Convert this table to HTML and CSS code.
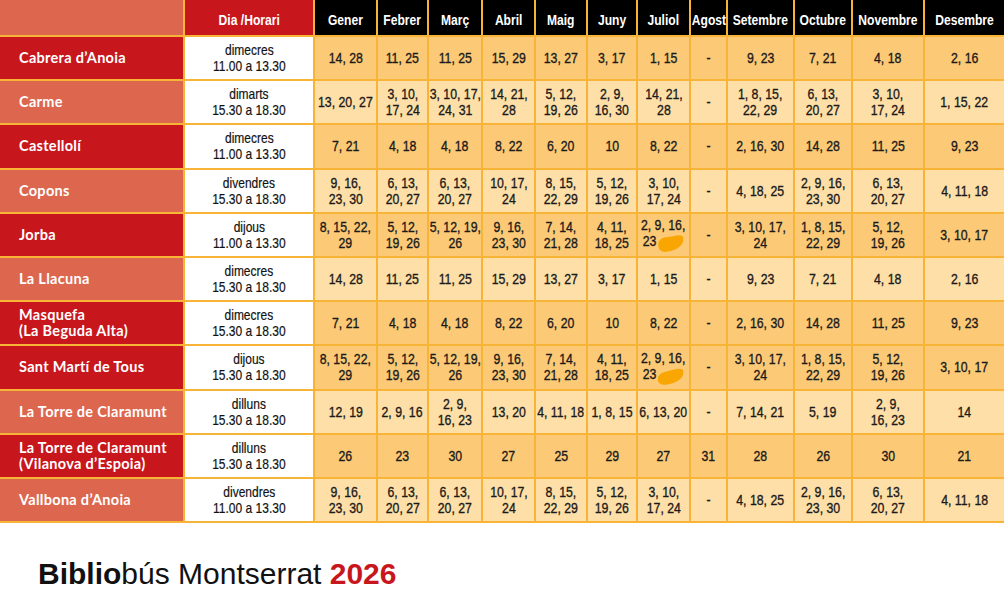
FILE: index.html
```html
<!DOCTYPE html>
<html lang="ca">
<head>
<meta charset="utf-8">
<title>Bibliobús Montserrat 2026</title>
<link rel="stylesheet" href="styles.css">
</head>
<body>
<div class="table">
  <div class="row head">
    <div class="name salmon"></div>
    <div class="hdia"><span>Dia /Horari</span></div>
    <div class="m"><span>Gener</span></div><div class="m"><span>Febrer</span></div><div class="m"><span>Març</span></div><div class="m"><span>Abril</span></div><div class="m"><span>Maig</span></div><div class="m"><span>Juny</span></div><div class="m"><span>Juliol</span></div><div class="m"><span>Agost</span></div><div class="m"><span>Setembre</span></div><div class="m"><span>Octubre</span></div><div class="m"><span>Novembre</span></div><div class="m"><span>Desembre</span></div>
  </div>

  <div class="row dark">
    <div class="name red">Cabrera d’Anoia</div>
    <div class="dia"><span>dimecres<br>11.00 a 13.30</span></div>
    <div class="n"><span>14, 28</span></div><div class="n"><span>11, 25</span></div><div class="n"><span>11, 25</span></div><div class="n"><span>15, 29</span></div><div class="n"><span>13, 27</span></div><div class="n"><span>3, 17</span></div><div class="n"><span>1, 15</span></div><div class="n"><span>-</span></div><div class="n"><span>9, 23</span></div><div class="n"><span>7, 21</span></div><div class="n"><span>4, 18</span></div><div class="n"><span>2, 16</span></div>
  </div>

  <div class="row light">
    <div class="name salmon">Carme</div>
    <div class="dia"><span>dimarts<br>15.30 a 18.30</span></div>
    <div class="n"><span>13, 20, 27</span></div><div class="n"><span>3, 10,<br>17, 24</span></div><div class="n"><span>3, 10, 17,<br>24, 31</span></div><div class="n"><span>14, 21,<br>28</span></div><div class="n"><span>5, 12,<br>19, 26</span></div><div class="n"><span>2, 9,<br>16, 30</span></div><div class="n"><span>14, 21,<br>28</span></div><div class="n"><span>-</span></div><div class="n"><span>1, 8, 15,<br>22, 29</span></div><div class="n"><span>6, 13,<br>20, 27</span></div><div class="n"><span>3, 10,<br>17, 24</span></div><div class="n"><span>1, 15, 22</span></div>
  </div>

  <div class="row dark">
    <div class="name red">Castellolí</div>
    <div class="dia"><span>dimecres<br>11.00 a 13.30</span></div>
    <div class="n"><span>7, 21</span></div><div class="n"><span>4, 18</span></div><div class="n"><span>4, 18</span></div><div class="n"><span>8, 22</span></div><div class="n"><span>6, 20</span></div><div class="n"><span>10</span></div><div class="n"><span>8, 22</span></div><div class="n"><span>-</span></div><div class="n"><span>2, 16, 30</span></div><div class="n"><span>14, 28</span></div><div class="n"><span>11, 25</span></div><div class="n"><span>9, 23</span></div>
  </div>

  <div class="row light">
    <div class="name salmon">Copons</div>
    <div class="dia"><span>divendres<br>15.30 a 18.30</span></div>
    <div class="n"><span>9, 16,<br>23, 30</span></div><div class="n"><span>6, 13,<br>20, 27</span></div><div class="n"><span>6, 13,<br>20, 27</span></div><div class="n"><span>10, 17,<br>24</span></div><div class="n"><span>8, 15,<br>22, 29</span></div><div class="n"><span>5, 12,<br>19, 26</span></div><div class="n"><span>3, 10,<br>17, 24</span></div><div class="n"><span>-</span></div><div class="n"><span>4, 18, 25</span></div><div class="n"><span>2, 9, 16,<br>23, 30</span></div><div class="n"><span>6, 13,<br>20, 27</span></div><div class="n"><span>4, 11, 18</span></div>
  </div>

  <div class="row dark">
    <div class="name red">Jorba</div>
    <div class="dia"><span>dijous<br>11.00 a 13.30</span></div>
    <div class="n"><span>8, 15, 22,<br>29</span></div><div class="n"><span>5, 12,<br>19, 26</span></div><div class="n"><span>5, 12, 19,<br>26</span></div><div class="n"><span>9, 16,<br>23, 30</span></div><div class="n"><span>7, 14,<br>21, 28</span></div><div class="n"><span>4, 11,<br>18, 25</span></div><div class="n"><span>2, 9, 16,<br>23<svg class="blob" width="32" height="18" viewBox="0 0 26 16" preserveAspectRatio="none" aria-hidden="true"><path d="M1 8 C2 4 7 3 12 2.5 C17 2 22 0 25 2 C27 4.5 25.5 8.5 23 10.5 C20 13.5 15 15 9 15.8 C4 16.5 0.5 14 1 8 Z"/></svg></span></div><div class="n"><span>-</span></div><div class="n"><span>3, 10, 17,<br>24</span></div><div class="n"><span>1, 8, 15,<br>22, 29</span></div><div class="n"><span>5, 12,<br>19, 26</span></div><div class="n"><span>3, 10, 17</span></div>
  </div>

  <div class="row light">
    <div class="name salmon">La Llacuna</div>
    <div class="dia"><span>dimecres<br>15.30 a 18.30</span></div>
    <div class="n"><span>14, 28</span></div><div class="n"><span>11, 25</span></div><div class="n"><span>11, 25</span></div><div class="n"><span>15, 29</span></div><div class="n"><span>13, 27</span></div><div class="n"><span>3, 17</span></div><div class="n"><span>1, 15</span></div><div class="n"><span>-</span></div><div class="n"><span>9, 23</span></div><div class="n"><span>7, 21</span></div><div class="n"><span>4, 18</span></div><div class="n"><span>2, 16</span></div>
  </div>

  <div class="row dark">
    <div class="name red">Masquefa<br>(La Beguda Alta)</div>
    <div class="dia"><span>dimecres<br>15.30 a 18.30</span></div>
    <div class="n"><span>7, 21</span></div><div class="n"><span>4, 18</span></div><div class="n"><span>4, 18</span></div><div class="n"><span>8, 22</span></div><div class="n"><span>6, 20</span></div><div class="n"><span>10</span></div><div class="n"><span>8, 22</span></div><div class="n"><span>-</span></div><div class="n"><span>2, 16, 30</span></div><div class="n"><span>14, 28</span></div><div class="n"><span>11, 25</span></div><div class="n"><span>9, 23</span></div>
  </div>

  <div class="row dark">
    <div class="name red">Sant Martí de Tous</div>
    <div class="dia"><span>dijous<br>15.30 a 18.30</span></div>
    <div class="n"><span>8, 15, 22,<br>29</span></div><div class="n"><span>5, 12,<br>19, 26</span></div><div class="n"><span>5, 12, 19,<br>26</span></div><div class="n"><span>9, 16,<br>23, 30</span></div><div class="n"><span>7, 14,<br>21, 28</span></div><div class="n"><span>4, 11,<br>18, 25</span></div><div class="n"><span>2, 9, 16,<br>23<svg class="blob" width="32" height="18" viewBox="0 0 26 16" preserveAspectRatio="none" aria-hidden="true"><path d="M0.5 10 C1 6 6 4.5 11 3.5 C16 2.5 21 0.5 24.5 2 C27 3.5 26 8 23 10.5 C19.5 13.5 14 15 8.5 15.8 C3.5 16.3 0 14 0.5 10 Z"/></svg></span></div><div class="n"><span>-</span></div><div class="n"><span>3, 10, 17,<br>24</span></div><div class="n"><span>1, 8, 15,<br>22, 29</span></div><div class="n"><span>5, 12,<br>19, 26</span></div><div class="n"><span>3, 10, 17</span></div>
  </div>

  <div class="row light">
    <div class="name salmon">La Torre de Claramunt</div>
    <div class="dia"><span>dilluns<br>15.30 a 18.30</span></div>
    <div class="n"><span>12, 19</span></div><div class="n"><span>2, 9, 16</span></div><div class="n"><span>2, 9,<br>16, 23</span></div><div class="n"><span>13, 20</span></div><div class="n"><span>4, 11, 18</span></div><div class="n"><span>1, 8, 15</span></div><div class="n"><span>6, 13, 20</span></div><div class="n"><span>-</span></div><div class="n"><span>7, 14, 21</span></div><div class="n"><span>5, 19</span></div><div class="n"><span>2, 9,<br>16, 23</span></div><div class="n"><span>14</span></div>
  </div>

  <div class="row dark">
    <div class="name red">La Torre de Claramunt<br>(Vilanova d’Espoia)</div>
    <div class="dia"><span>dilluns<br>15.30 a 18.30</span></div>
    <div class="n"><span>26</span></div><div class="n"><span>23</span></div><div class="n"><span>30</span></div><div class="n"><span>27</span></div><div class="n"><span>25</span></div><div class="n"><span>29</span></div><div class="n"><span>27</span></div><div class="n"><span>31</span></div><div class="n"><span>28</span></div><div class="n"><span>26</span></div><div class="n"><span>30</span></div><div class="n"><span>21</span></div>
  </div>

  <div class="row light">
    <div class="name salmon">Vallbona d’Anoia</div>
    <div class="dia"><span>divendres<br>11.00 a 13.30</span></div>
    <div class="n"><span>9, 16,<br>23, 30</span></div><div class="n"><span>6, 13,<br>20, 27</span></div><div class="n"><span>6, 13,<br>20, 27</span></div><div class="n"><span>10, 17,<br>24</span></div><div class="n"><span>8, 15,<br>22, 29</span></div><div class="n"><span>5, 12,<br>19, 26</span></div><div class="n"><span>3, 10,<br>17, 24</span></div><div class="n"><span>-</span></div><div class="n"><span>4, 18, 25</span></div><div class="n"><span>2, 9, 16,<br>23, 30</span></div><div class="n"><span>6, 13,<br>20, 27</span></div><div class="n"><span>4, 11, 18</span></div>
  </div>
</div>

<h1 class="title"><b>Biblio</b>bús Montserrat <b class="year">2026</b></h1>
</body>
</html>
```

FILE: styles.css
```css
html, body {
  margin: 0;
  padding: 0;
  background: #ffffff;
}

body {
  width: 1004px;
  height: 606px;
  overflow: hidden;
  font-family: "Liberation Sans", Arial, sans-serif;
}

.table {
  display: flex;
  flex-direction: column;
  gap: 2px;
  background: #f8b437;
  padding-bottom: 2px;
}

.row {
  display: grid;
  grid-template-columns: 183px 128px 61px 49px 52px 51px 50px 48px 51px 35px 65px 56px 70px 79px;
  column-gap: 2px;
  height: 42.2px;
}

.row.head {
  height: 35px;
}

.row > div {
  display: flex;
  align-items: center;
  justify-content: center;
  text-align: center;
  min-width: 0;
}

.row > div > span {
  display: inline-block;
  white-space: nowrap;
  transform: scaleX(0.8);
  transform-origin: 50% 50%;
}

.name {
  justify-content: flex-start !important;
  text-align: left !important;
  padding-left: 19px;
  color: #ffffff;
  font-family: "Lato", "Open Sans", sans-serif;
  font-weight: 700;
  font-size: 14.5px;
  line-height: 16px;
  letter-spacing: 0.3px;
}

.red { background: #c8161d; }
.salmon { background: #dc674e; }

.head .hdia {
  background: #c8161d;
  color: #ffffff;
  font-weight: 700;
  font-size: 15.5px;
  align-items: flex-end;
  padding-bottom: 6px;
  box-sizing: border-box;
}

.head .m {
  background: #000000;
  color: #ffffff;
  font-weight: 700;
  font-size: 15.5px;
  align-items: flex-end;
  padding-bottom: 6px;
  box-sizing: border-box;
}

.head .m > span,
.head .hdia > span {
  transform: scaleX(0.78);
}

.dia {
  background: #ffffff;
  color: #111111;
  font-size: 15px;
  line-height: 16px;
}

.dia > span {
  -webkit-text-stroke: 0.2px #111111;
}

.n {
  color: #1a1a1a;
  font-size: 15px;
  line-height: 16px;
}

.n > span {
  transform: scaleX(0.82) !important;
  -webkit-text-stroke: 0.35px #1a1a1a;
}

.dark .n { background: #fcc976; }
.light .n { background: #fedfa7; }

.blob {
  display: inline-block;
  width: 32px;
  height: 18px;
  vertical-align: -6px;
  margin-left: 1px;
  margin-top: -4px;
  fill: #f9a602;
}

.title {
  margin: 0;
  padding: 34px 0 0 38px;
  font-family: "Liberation Sans", Arial, sans-serif;
  font-weight: 400;
  font-size: 30px;
  letter-spacing: 0;
  color: #111111;
  line-height: 34px;
}

.title b {
  font-weight: 700;
}

.title .year {
  color: #c8161d;
}
```
